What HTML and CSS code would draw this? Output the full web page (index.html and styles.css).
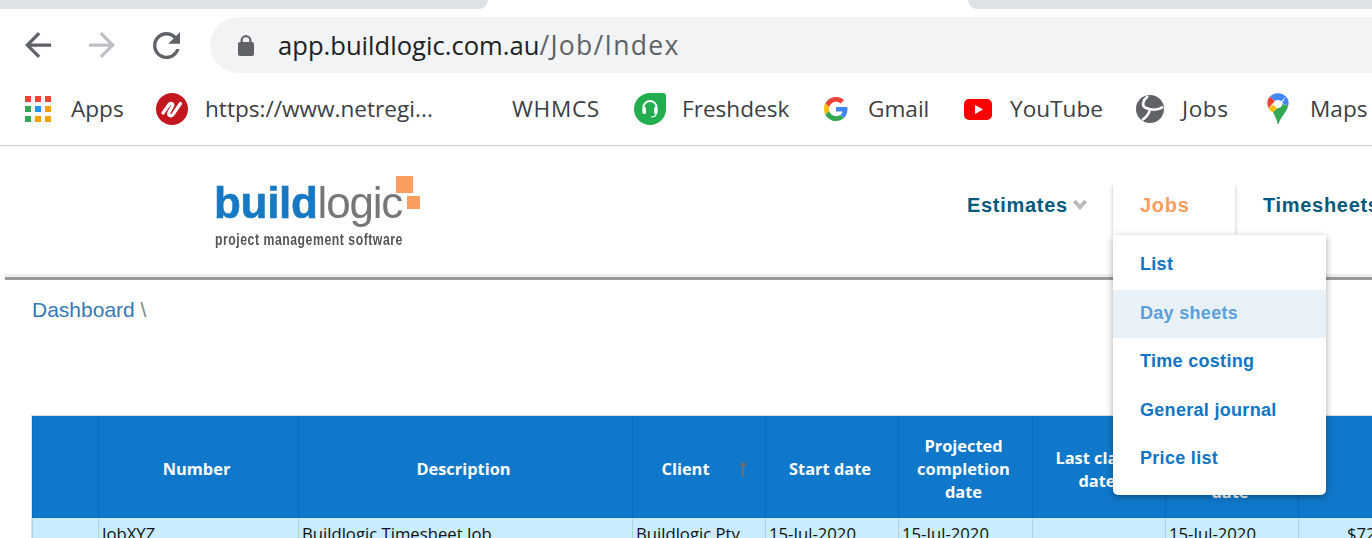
FILE: index.html
```html
<!DOCTYPE html>
<html lang="en">
<head>
    <meta charset="UTF-8">
    <meta name="viewport" content="width=device-width, initial-scale=1.0">
    <title>Buildlogic - Jobs</title>
    <link rel="stylesheet" href="styles.css">
</head>
<body>
    <div class="tabstrip">
        <div class="tab-left"></div>
        <div class="tab-active"></div>
        <div class="tab-right"></div>
    </div>

    <div class="toolbar">
        <svg class="nav-icon back" viewBox="4 4 16 16" width="26" height="26"><path fill="#5f6368" d="M20 11H7.83l5.59-5.59L12 4l-8 8 8 8 1.41-1.41L7.83 13H20v-2z"/></svg>
        <svg class="nav-icon forward" viewBox="4 4 16 16" width="26" height="26"><path fill="#bdc1c6" d="M12 4l-1.41 1.41L16.17 11H4v2h12.17l-5.58 5.59L12 20l8-8z"/></svg>
        <svg class="nav-icon reload" viewBox="4 4 16 16" width="27" height="27"><path fill="#5f6368" d="M17.65 6.35C16.2 4.9 14.21 4 12 4c-4.42 0-7.99 3.58-7.99 8s3.57 8 7.99 8c3.73 0 6.84-2.55 7.73-6h-2.08c-.82 2.33-3.04 4-5.65 4-3.31 0-6-2.69-6-6s2.69-6 6-6c1.66 0 3.14.69 4.22 1.78L13 11h7V4l-2.35 2.35z"/></svg>
        <div class="omnibox">
            <svg class="lock" viewBox="0 0 16 21" width="16" height="21"><path fill="none" stroke="#5f6368" stroke-width="2.2" d="M3.6 8V5.6a4.4 4.4 0 0 1 8.8 0V8"/><rect y="7" width="16" height="14" rx="2" fill="#5f6368"/></svg>
            <span class="url">app.buildlogic.com.au<span class="url-path">/Job/Index</span></span>
        </div>
    </div>

    <div class="bookmarks">
        <a class="bm bm-apps">
            <svg viewBox="0 0 26 26" width="26" height="26">
                <rect width="6" height="6" fill="#f44336"/><rect x="10" width="6" height="6" fill="#f44336"/><rect x="20" width="6" height="6" fill="#f44336"/>
                <rect y="10" width="6" height="6" fill="#34a853"/><rect x="10" y="10" width="6" height="6" fill="#2196f3"/><rect x="20" y="10" width="6" height="6" fill="#f4a400"/>
                <rect y="20" width="6" height="6" fill="#34a853"/><rect x="10" y="20" width="6" height="6" fill="#f4a400"/><rect x="20" y="20" width="6" height="6" fill="#f4a400"/>
            </svg>
            Apps
        </a>
        <a class="bm bm-net">
            <svg viewBox="0 0 32 32" width="32" height="32"><circle cx="16" cy="16" r="16" fill="#c4161f"/><path fill="none" stroke="#fff" stroke-width="3.200" stroke-linecap="round" d="M7 20l6-8.500c1.500-2 5-1 3.500 1.500L13 19.500c-1.200 3 2 4.500 4 2l7.500-11"/></svg>
            https://www.netregi...
        </a>
        <a class="bm bm-whmcs">WHMCS</a>
        <a class="bm bm-fresh">
            <svg viewBox="0 0 32 32" width="32" height="32"><path fill="#22ad4e" d="M16 0h13a3 3 0 0 1 3 3v13a16 16 0 1 1-16-16z"/><path fill="none" stroke="#fff" stroke-width="2" d="M9.500 18v-3.500a6.500 6.500 0 0 1 13 0V18"/><rect x="8.500" y="14" width="3.500" height="7" rx="1.500" fill="#fff"/><rect x="20" y="14" width="3.500" height="7" rx="1.500" fill="#fff"/><path fill="none" stroke="#fff" stroke-width="1.200" d="M22 21c0 2-2 3-5 3"/></svg>
            Freshdesk
        </a>
        <a class="bm bm-google">
            <svg viewBox="0 0 48 48" width="24" height="24">
                <path fill="#EA4335" d="M24 9.500c3.540 0 6.710 1.220 9.210 3.600l6.850-6.850C35.900 2.380 30.470 0 24 0 14.620 0 6.510 5.380 2.560 13.220l7.980 6.190C12.430 13.720 17.740 9.500 24 9.500z"/>
                <path fill="#4285F4" d="M46.980 24.550c0-1.570-.15-3.090-.38-4.550H24v9.020h12.940c-.58 2.960-2.260 5.480-4.780 7.180l7.730 6c4.510-4.180 7.090-10.360 7.090-17.650z"/>
                <path fill="#FBBC05" d="M10.530 28.590c-.48-1.450-.76-2.990-.76-4.590s.27-3.140.76-4.590l-7.980-6.190C.92 16.460 0 20.120 0 24c0 3.880.92 7.540 2.560 10.780l7.970-6.190z"/>
                <path fill="#34A853" d="M24 48c6.480 0 11.930-2.130 15.890-5.810l-7.730-6c-2.150 1.450-4.920 2.300-8.160 2.300-6.260 0-11.570-4.220-13.470-9.910l-7.980 6.190C6.510 42.620 14.620 48 24 48z"/>
            </svg>
            Gmail
        </a>
        <a class="bm bm-youtube">
            <svg viewBox="0 0 28 21" width="28" height="21"><rect width="28" height="21" rx="5" fill="#f00"/><path fill="#fff" d="M11 6l8 4.500-8 4.500z"/></svg>
            YouTube
        </a>
        <a class="bm bm-globe">
            <svg viewBox="0 0 28 28" width="28" height="28"><circle cx="14" cy="14" r="14" fill="#5f6368"/><path fill="none" stroke="#fff" stroke-width="2.600" d="M12 1C7 5 5 11 10 13c5 2 11 3 17-1M14 14c-1 5-3 8-8 11"/></svg>
            Jobs
        </a>
        <a class="bm bm-maps">
            <svg viewBox="0 0 22 32" width="22" height="32">
                <path fill="#34a853" d="M6 19l10-8 5 2c-1 6-7 10-10 19-1-5-3-9-5-13z"/>
                <path fill="#fbbc04" d="M1.500 15l6-4 4 3-5.500 5c-1.500 0-3.500-2-4.500-4z"/>
                <path fill="#ea4335" d="M3 3.500l5 4.500-6.500 7C0 12 -.5 7 3 3.500z"/>
                <path fill="#4285f4" d="M3 3.500C7-1 15-1 19 3.500l-5 5-3-1-3 .5z"/>
                <path fill="#4285f4" d="M19 3.500c3 3 3 7 2 9.500l-6-3z"/>
                <circle cx="11" cy="11" r="4" fill="#fff"/>
            </svg>
            Maps
        </a>
    </div>

    <header class="site-header">
        <div class="logo">
            <div class="logo-word"><b>build</b><span>logic</span></div>
            <div class="logo-tag">project management software</div>
            <span class="logo-sq sq-one"></span>
            <span class="logo-sq sq-two"></span>
        </div>
        <ul class="main-nav">
            <li class="nav-item estimates">
                Estimates
                <svg viewBox="0 0 14 11" width="14" height="11"><path fill="none" stroke="#bbb" stroke-width="4" d="M1.400 2l5.600 6 5.600-6"/></svg>
            </li>
            <li class="nav-item jobs">
                Jobs
                <ul class="dropdown">
                    <li>List</li>
                    <li class="hover">Day sheets</li>
                    <li>Time costing</li>
                    <li>General journal</li>
                    <li>Price list</li>
                </ul>
            </li>
            <li class="nav-item timesheets">Timesheets</li>
        </ul>
    </header>

    <div class="breadcrumb"><a>Dashboard</a> <span>\</span></div>

    <table class="jobs-table">
        <thead>
            <tr>
                <th class="c-sel"></th>
                <th class="c-num">Number</th>
                <th class="c-desc">Description</th>
                <th class="c-client">Client
                    <svg class="sort" viewBox="0 0 8 16" width="8" height="16"><path fill="#66707a" d="M4 0l4 5H5.200v11H2.800V5H0z"/></svg>
                </th>
                <th class="c-date">Start date</th>
                <th class="c-date-wide">Projected completion date</th>
                <th class="c-date">Last claim date</th>
                <th class="c-date">Actual completion date</th>
                <th class="c-value"></th>
            </tr>
        </thead>
        <tbody>
            <tr>
                <td></td>
                <td>JobXYZ</td>
                <td>Buildlogic Timesheet Job</td>
                <td>Buildlogic Pty Ltd</td>
                <td>15-Jul-2020</td>
                <td>15-Jul-2020</td>
                <td></td>
                <td>15-Jul-2020</td>
                <td class="num">$72.00</td>
            </tr>
        </tbody>
    </table>
</body>
</html>
```

FILE: styles.css
```css
* {
    box-sizing: border-box;
    margin: 0;
    padding: 0;
}

html, body {
    height: 100%;
    overflow: hidden;
}

body {
    background: #fff;
    font-family: 'Open Sans', sans-serif;
    width: 1372px;
}

ul {
    list-style: none;
}

/* browser chrome */
.tabstrip {
    display: flex;
    height: 9px;
}

.tab-left, .tab-right {
    background: #dee1e6;
}

.tab-left {
    width: 488px;
    border-bottom-right-radius: 9px;
}

.tab-active {
    width: 480px;
}

.tab-right {
    flex: 1;
    border-bottom-left-radius: 9px;
}

.toolbar {
    display: flex;
    align-items: center;
    height: 64px;
    padding: 8px 0 0 25px;
}

.nav-icon {
    flex: none;
}

.forward, .reload {
    margin-left: 38px;
}

.omnibox {
    flex: 1;
    display: flex;
    align-items: center;
    height: 56px;
    margin-left: 30px;
    padding-left: 28px;
    background: #f1f3f4;
    border-radius: 28px 0 0 28px;
}

.lock {
    margin-right: 24px;
}

.url {
    font-size: 25.6px;
    color: #202124;
}

.url-path {
    color: #5f6368;
    font-size: 26.5px;
    letter-spacing: 1.3px;
}

.bookmarks {
    display: grid;
    grid-template-columns: 131px 356px 122px 190px 140px 172px 131px auto;
    align-items: center;
    height: 73px;
    padding-left: 25px;
    border-bottom: 1px solid #ccc;
    font-size: 22.6px;
    line-height: 30px;
    color: #3c4043;
}

.bm {
    display: flex;
    align-items: center;
    white-space: nowrap;
}

.bm-apps svg { margin-right: 20px; }
.bm-net svg { margin-right: 17px; }
.bm-fresh svg { margin-right: 16px; }
.bm-google svg { margin-right: 20px; }
.bm-youtube svg { margin-right: 18px; }
.bm-globe svg { margin-right: 18px; }
.bm-maps svg { margin-right: 21px; }
.bm-whmcs { letter-spacing: 0.7px; }
.bm-globe { letter-spacing: 0.6px; }

/* site header */
.site-header {
    display: flex;
    height: 134px;
    margin-left: 5px;
    padding-left: 210px;
    border-bottom: 3px solid #999;
    box-shadow: inset 0 -3px 0 #eee;
    font-family: 'Liberation Sans', Arial, sans-serif;
}

.logo {
    position: relative;
    flex: none;
    width: 206px;
    padding-top: 32px;
    filter: blur(0.5px);
}

.logo-word {
    height: 50px;
    margin-left: -1px;
    font-size: 44px;
    line-height: 50px;
    color: #777;
    white-space: nowrap;
}

.logo-word b {
    color: #1679c2;
    letter-spacing: -0.3px;
    -webkit-text-stroke: 0.6px #1679c2;
}

.logo-word span {
    letter-spacing: -1.2px;
}

.logo-tag {
    margin-top: 3px;
    font-family: 'Liberation Sans', sans-serif;
    font-size: 16px;
    font-weight: bold;
    line-height: 18px;
    color: #555;
    letter-spacing: 0.7px;
    white-space: nowrap;
    transform: scaleX(0.765);
    transform-origin: left center;
}

.logo-sq {
    position: absolute;
    background: #fb9d5e;
}

.sq-one {
    left: 181px;
    top: 30px;
    width: 17px;
    height: 17px;
}

.sq-two {
    left: 192px;
    top: 50px;
    width: 13px;
    height: 13px;
}

.main-nav {
    display: flex;
    flex: none;
    margin-left: 546px;
    padding-top: 39px;
    font-size: 20px;
    font-weight: bold;
    letter-spacing: 0.7px;
    color: #045a7d;
}

.nav-item {
    height: 50px;
    white-space: nowrap;
}

.estimates {
    width: 146px;
    padding-top: 9px;
}

.estimates svg {
    margin-left: -1px;
    vertical-align: 2px;
}

.jobs {
    position: relative;
    width: 122px;
    padding: 9px 0 0 27px;
    color: #fb9d5e;
    background: #fff;
    box-shadow: 0 0 4px rgba(0, 0, 0, 0.25);
    clip-path: inset(0 -300px -300px -10px);
}

.timesheets {
    padding: 9px 0 0 28px;
}

.dropdown {
    position: absolute;
    left: 0;
    top: 50px;
    width: 213px;
    height: 260px;
    padding-top: 6px;
    background: #fff;
    border-radius: 0 0 5px 5px;
    box-shadow: 0 2px 7px rgba(0, 0, 0, 0.35);
    font-size: 18px;
    letter-spacing: 0.3px;
    color: #0f75c6;
    z-index: 5;
}

.dropdown li {
    height: 48.500px;
    padding-left: 27px;
    line-height: 47px;
}

.dropdown .hover {
    background: #e9f1f8;
    color: #5a9fdc;
}

.breadcrumb {
    height: 136px;
    padding: 16px 0 0 32px;
    font-family: 'Liberation Sans', Arial, sans-serif;
    font-size: 21px;
    line-height: 28px;
    color: #337ab7;
}

.breadcrumb span {
    color: #888;
}

/* table */
.jobs-table {
    table-layout: fixed;
    border-collapse: collapse;
    width: 1375px;
    margin-left: 32px;
    box-shadow: 0 0 0 1px #ddd;
    font-size: 16.7px;
}

.c-sel { width: 66px; }
.c-num { width: 200px; }
.c-desc { width: 334px; }
.c-client { width: 133px; }
.c-date { width: 133px; }
.c-date-wide { width: 134px; }
.c-value { width: 108px; }

.jobs-table th {
    height: 101px;
    padding: 5px 12px 0 8px;
    background: #0f78ca;
    border: 1px solid #0e6cb5;
    border-top: 0;
    color: #fff;
    font-size: 16.4px;
    font-weight: bold;
    line-height: 23px;
    vertical-align: middle;
}

.jobs-table th.c-client {
    position: relative;
    padding-right: 35px;
}

.sort {
    position: absolute;
    right: 18px;
    top: 45px;
}

.jobs-table td {
    padding: 4px 3px;
    background: #c9edfe;
    border: 1px solid #b3d0de;
    color: #111;
    line-height: 23px;
    vertical-align: top;
}

.jobs-table td.num {
    padding-right: 7px;
    text-align: right;
}
```
